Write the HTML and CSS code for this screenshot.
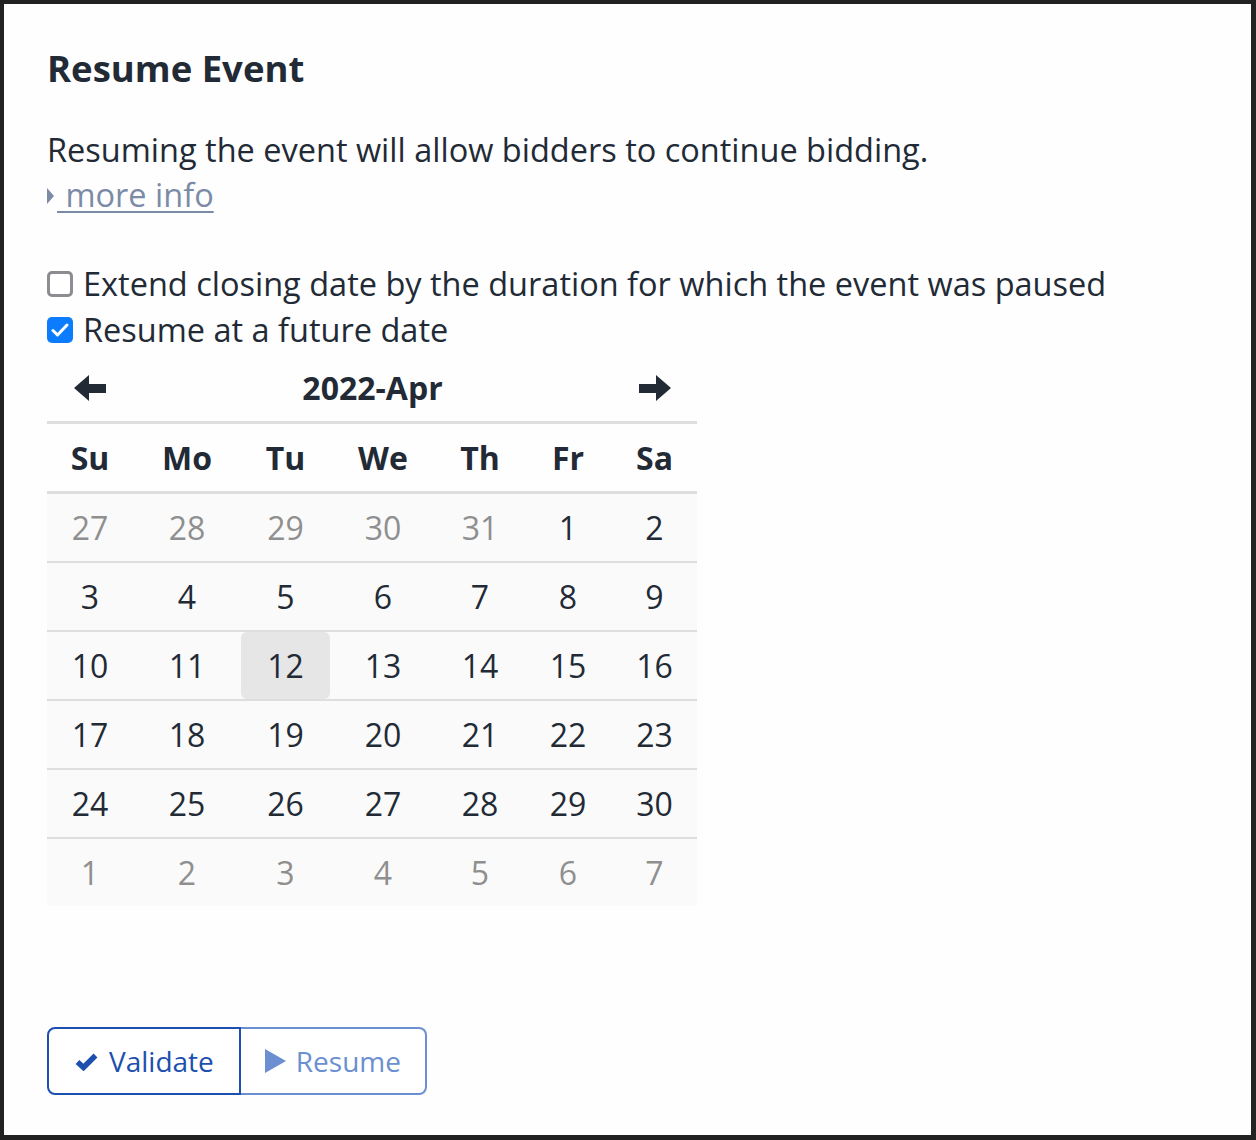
FILE: index.html
```html
<!DOCTYPE html>
<html lang="en">
<head>
  <meta charset="UTF-8">
  <title>Resume Event</title>
  <link rel="stylesheet" href="styles.css">
</head>
<body>
  <div class="frame">
    <h2 class="title">Resume Event</h2>
    <p class="lead">Resuming the event will allow bidders to continue bidding.</p>
    <div class="more">
      <span class="more-caret"></span><span class="more-link">&nbsp;more info</span>
    </div>

    <div class="options">
      <label class="option">
        <span class="box"></span>
        Extend closing date by the duration for which the event was paused
      </label>
      <label class="option">
        <span class="box checked">
          <svg width="18" height="14" viewBox="0 0 18 14"><polyline points="2,7.5 6.5,12 16,2" fill="none" stroke="#fff" stroke-width="3" stroke-linecap="round" stroke-linejoin="round"/></svg>
        </span>
        Resume at a future date
      </label>
    </div>

    <div class="calendar">
      <div class="cal-row cal-head">
        <div class="cell">
          <svg width="32" height="26" viewBox="0 0 32 26"><polygon points="0,13 15,0 15,9 32,9 32,18 15,18 15,26" fill="#222a36"/></svg>
        </div>
        <div class="cell month">2022-Apr</div>
        <div class="cell">
          <svg width="32" height="26" viewBox="0 0 32 26"><polygon points="32,13 17,0 17,9 0,9 0,18 17,18 17,26" fill="#222a36"/></svg>
        </div>
      </div>
      <div class="cal-row cal-days">
        <div class="cell">Su</div><div class="cell">Mo</div><div class="cell">Tu</div><div class="cell">We</div><div class="cell">Th</div><div class="cell">Fr</div><div class="cell">Sa</div>
      </div>
      <div class="cal-row week">
        <div class="cell muted">27</div><div class="cell muted">28</div><div class="cell muted">29</div><div class="cell muted">30</div><div class="cell muted">31</div><div class="cell">1</div><div class="cell">2</div>
      </div>
      <div class="cal-row week">
        <div class="cell">3</div><div class="cell">4</div><div class="cell">5</div><div class="cell">6</div><div class="cell">7</div><div class="cell">8</div><div class="cell">9</div>
      </div>
      <div class="cal-row week">
        <div class="cell">10</div><div class="cell">11</div><div class="cell today">12</div><div class="cell">13</div><div class="cell">14</div><div class="cell">15</div><div class="cell">16</div>
      </div>
      <div class="cal-row week">
        <div class="cell">17</div><div class="cell">18</div><div class="cell">19</div><div class="cell">20</div><div class="cell">21</div><div class="cell">22</div><div class="cell">23</div>
      </div>
      <div class="cal-row week">
        <div class="cell">24</div><div class="cell">25</div><div class="cell">26</div><div class="cell">27</div><div class="cell">28</div><div class="cell">29</div><div class="cell">30</div>
      </div>
      <div class="cal-row week last">
        <div class="cell muted">1</div><div class="cell muted">2</div><div class="cell muted">3</div><div class="cell muted">4</div><div class="cell muted">5</div><div class="cell muted">6</div><div class="cell muted">7</div>
      </div>
    </div>

    <div class="btn-group">
      <button class="btn btn-validate">
        <svg width="25" height="19" viewBox="0 0 25 19"><polyline points="3.5,10 9.5,15.5 21.5,3.5" fill="none" stroke="#1c4fae" stroke-width="5.5" stroke-linejoin="miter"/></svg>
        Validate
      </button>
      <button class="btn btn-resume" disabled>
        <svg width="21" height="24" viewBox="0 0 21 24"><polygon points="0,0 21,12 0,24" fill="#6b8fd0"/></svg>
        Resume
      </button>
    </div>
  </div>
</body>
</html>
```

FILE: styles.css
```css
html, body {
  margin: 0;
  padding: 0;
  background: #fefefe;
  font-family: 'Open Sans', sans-serif;
  color: #222a36;
}

.frame {
  height: 1140px;
  box-sizing: border-box;
  border: 4px solid #222;
  border-right-width: 5px;
  border-bottom-width: 5px;
  padding: 40px 43px 0 43px;
}

.title {
  margin: 0;
  font-size: 36.5px;
  font-weight: 700;
  line-height: 48px;
}

.lead {
  margin: 35px 0 0 0;
  font-size: 32.5px;
  line-height: 45px;
}

.more {
  font-size: 32.5px;
  line-height: 45px;
  color: #7b8ba6;
  display: flex;
  align-items: center;
}

.more-caret {
  width: 0;
  height: 0;
  border-top: 8px solid transparent;
  border-bottom: 8px solid transparent;
  border-left: 7px solid #7b8ba6;
  margin-top: 2px;
  margin-right: 3px;
}

.more-link {
  text-decoration: underline;
  text-underline-offset: 4px;
  text-decoration-thickness: 2px;
}

.options {
  margin-top: 44px;
}

.option {
  display: flex;
  align-items: center;
  gap: 10px;
  font-size: 32.5px;
  line-height: 46px;
}

.box {
  width: 26px;
  height: 26px;
  box-sizing: border-box;
  border: 3px solid #8c8c92;
  border-radius: 5px;
  background: #fff;
  display: flex;
  align-items: center;
  justify-content: center;
}

.box.checked {
  border: none;
  background: #0c7cff;
}

.calendar {
  width: 650px;
  margin-top: 1px;
}

.cal-row {
  display: grid;
  grid-template-columns: 86px 108px 89px 106px 88px 88px 85px;
  border-bottom: 2px solid #dedede;
}

.cell {
  height: 67px;
  display: flex;
  align-items: center;
  justify-content: center;
  font-size: 32px;
}

.cal-head {
  border-bottom-width: 3px;
}

.cal-head .month {
  grid-column: span 5;
  font-weight: 700;
}

.cal-days {
  border-bottom-width: 3px;
}

.cal-days .cell {
  font-weight: 700;
}

.week {
  background: #fafafa;
}

.week.last {
  border-bottom: none;
}

.muted {
  color: #8f8f8f;
}

.today {
  background: #e6e6e6;
  border-radius: 6px;
}

.btn-group {
  display: flex;
  margin-top: 121px;
}

.btn {
  height: 68px;
  display: flex;
  align-items: center;
  gap: 10px;
  font-family: 'Open Sans', sans-serif;
  font-size: 28px;
  background: #fff;
  padding: 0 25px;
  cursor: pointer;
}

.btn-validate {
  color: #1c4fae;
  border: 2px solid #1c4fae;
  border-radius: 8px 0 0 8px;
}

.btn-resume {
  color: #6b8fd0;
  border: 2px solid #6b8fd0;
  border-left: none;
  border-radius: 0 8px 8px 0;
  padding: 0 24px 0 24px;
}
```
